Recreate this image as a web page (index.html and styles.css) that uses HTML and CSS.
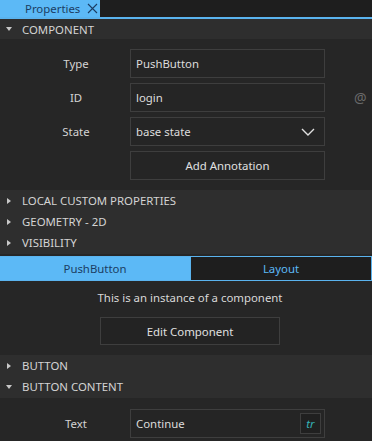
FILE: index.html
```html
<!DOCTYPE html>
<html>
<head>
<meta charset="utf-8">
<link rel="stylesheet" href="styles.css">
</head>
<body>
<div class="panel">
  <div class="tabbar">
    <div class="tab">Properties
      <svg class="close" width="11" height="11" viewBox="0 0 11 11"><path d="M1 1L10 10M10 1L1 10" stroke="#1b3d63" stroke-width="1.1" fill="none"/></svg>
    </div>
  </div>

  <div class="sec-head open"><span class="tri down"></span>COMPONENT</div>
  <div class="sec-body">
    <div class="row"><span class="label">Type</span><div class="field">PushButton</div></div>
    <div class="row"><span class="label">ID</span><div class="field">login</div><span class="at">@</span></div>
    <div class="row"><span class="label">State</span><div class="field select">base state
      <svg class="chev" width="14" height="8" viewBox="0 0 14 8"><path d="M1 1L7 7L13 1" stroke="#e0e0e0" stroke-width="1.4" fill="none"/></svg></div></div>
    <div class="row"><span class="label"></span><div class="field btn">Add Annotation</div></div>
  </div>

  <div class="sec-group">
    <div class="sec-head"><span class="tri right"></span>LOCAL CUSTOM PROPERTIES</div>
    <div class="sec-head"><span class="tri right"></span>GEOMETRY - 2D</div>
    <div class="sec-head"><span class="tri right"></span>VISIBILITY</div>
  </div>

  <div class="tabs2">
    <div class="t2 active">PushButton</div>
    <div class="t2">Layout</div>
  </div>

  <div class="instance">
    <div class="note">This is an instance of a component</div>
    <div class="edit">Edit Component</div>
  </div>

  <div class="sec-group">
    <div class="sec-head"><span class="tri right"></span>BUTTON</div>
    <div class="sec-head"><span class="tri down"></span>BUTTON CONTENT</div>
  </div>

  <div class="sec-body last">
    <div class="row"><span class="label">Text</span><div class="field">Continue<span class="tr">tr</span></div></div>
  </div>
</div>
</body>
</html>
```

FILE: styles.css
```css
* { box-sizing: border-box; }
html, body { margin: 0; padding: 0; background: #262626; }
body {
  width: 372px;
  height: 441px;
  overflow: hidden;
  font-family: "Noto Sans", "Open Sans", sans-serif;
  font-size: 11.4px;
  color: #d6d6d6;
}
.panel { display: flex; flex-direction: column; }

.tabbar {
  height: 19px;
  background: #1e1e1e;
  border-bottom: 2px solid #5ab3ee;
  display: flex;
}
.tab {
  width: 100px;
  height: 17px;
  background: #5cb9f6;
  color: #1b3d63;
  display: flex;
  align-items: center;
  padding-left: 25px;
  gap: 7px;
}
.close { flex: none; }

.sec-head {
  height: 21px;
  display: flex;
  align-items: center;
  padding-left: 5px;
  color: #d4d4d4;
  background: #2e2e2e;
}
.sec-head.open { height: 20px; }
.tri {
  width: 0;
  height: 0;
  flex: none;
}
.tri.down {
  border-left: 3.5px solid transparent;
  border-right: 3.5px solid transparent;
  border-top: 4px solid #c8c8c8;
  margin-left: 1px;
  margin-right: 10px;
}
.tri.right {
  border-top: 3.5px solid transparent;
  border-bottom: 3.5px solid transparent;
  border-left: 4px solid #c8c8c8;
  margin-left: 2px;
  margin-right: 11px;
}

.sec-body {
  padding: 10px 0;
  display: flex;
  flex-direction: column;
  gap: 5px;
  background: #262626;
}
.sec-body.last { padding-top: 11px; }
.row {
  display: flex;
  align-items: center;
  height: 29px;
}
.label {
  width: 130px;
  padding-left: 30px;
  padding-right: 8px;
  text-align: center;
  color: #d4d4d4;
}
.field {
  width: 195px;
  height: 29px;
  border: 1px solid #3e3e3e;
  background: #252525;
  display: flex;
  align-items: center;
  padding-left: 5px;
  color: #dcdcdc;
  position: relative;
}
.field.select { justify-content: space-between; padding-right: 9px; }
.field.btn { justify-content: center; padding-left: 0; color: #e0e0e0; }
.at {
  margin-left: 29px;
  color: #6a6a6a;
  font-size: 14px;
}
.tr {
  position: absolute;
  right: 3px;
  top: 3px;
  width: 21px;
  height: 21px;
  border: 1px solid #3e3e3e;
  background: #202020;
  color: #35b3b8;
  font-style: italic;
  display: flex;
  align-items: center;
  justify-content: center;
}

.sec-group {
  display: flex;
  flex-direction: column;
  background: #2e2e2e;
  padding-bottom: 1px;
}

.tabs2 {
  margin-top: 2px;
  height: 25px;
  display: flex;
  border-top: 1px solid #5ab3ee;
  border-bottom: 1px solid #5ab3ee;
  background: #1e1e1e;
}
.t2 {
  flex: 1;
  display: flex;
  align-items: center;
  justify-content: center;
  color: #5cb9f6;
}
.t2.active {
  flex: none;
  width: 190px;
  background: #5cb9f6;
  color: #1b3d63;
}
.t2:last-child { border-left: 1px solid #5ab3ee; border-right: 1px solid #5ab3ee; }

.instance {
  display: flex;
  flex-direction: column;
  align-items: center;
  padding: 9px 0 10px 8px;
}
.note { color: #d8d8d8; height: 16px; line-height: 16px; }
.edit {
  margin-top: 11px;
  width: 180px;
  height: 28px;
  border: 1px solid #3e3e3e;
  background: #232323;
  display: flex;
  align-items: center;
  justify-content: center;
  color: #e0e0e0;
}
```
